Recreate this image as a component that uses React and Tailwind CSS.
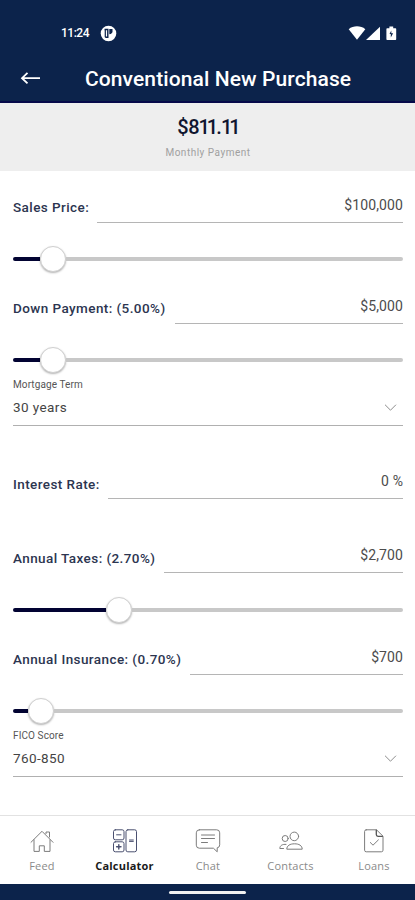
import React from "react";

const strokeProps = {
  fill: "none",
  stroke: "currentColor",
  strokeWidth: 1,
  strokeLinecap: "round",
  strokeLinejoin: "round",
};

function StatusBar() {
  return (
    <div className="flex h-[54px] items-end justify-between pl-[61px] pr-[18px] pb-[11px] text-white">
      <div className="flex h-5 items-center">
        <span className="w-[28px] whitespace-nowrap text-[12px] font-medium leading-5 tracking-[-0.5px]">11:24</span>
        <svg className="ml-[11px]" width="17" height="17" viewBox="0 0 17 17">
          <circle cx="8.5" cy="8.5" r="7.8" fill="#fff" />
          <path d="M4.6 4.5h3.2v7.8H5.3" fill="none" stroke="#0c234b" strokeWidth="1.4" />
          <path d="M5.3 4.5v7.8" fill="none" stroke="#0c234b" strokeWidth="1.2" />
          <path d="M9.3 3.9h3.2v2.4c0 1.7-1.1 2.8-3.2 3z" fill="#0c234b" />
        </svg>
      </div>
      <svg width="50" height="20" viewBox="0 0 50 20">
        <path d="M1.7 6.2C6.2 2.4 13.8 2.4 18.3 6.2L10 16.8z" fill="#fff" />
        <path d="M19 17L33 3.7V17z" fill="#fff" />
        <path d="M40.1 5.2h2.3V3.5h3.8v1.7H48.5q.7 0 .7.7v10.4q0 .7-.7.7h-8.4q-.7 0-.7-.7V5.9q0-.7.7-.7z" fill="#fff" />
        <path d="M44.3 7.4L42.5 11h1.3v3.4l2.3-4.1h-1.8z" fill="#0c234b" />
      </svg>
    </div>
  );
}

function Header() {
  return (
    <header className="h-[103px] border-b-2 border-[#06094a] bg-[#0c234b]">
      <StatusBar />
      <div className="flex h-[48px] items-center text-white">
        <svg className="ml-5 shrink-0" width="22" height="20" viewBox="0 0 22 20">
          <path d="M20 10.2H2M7.5 4.8L2 10.2L7.5 15.4" fill="none" stroke="#fff" strokeWidth="1.8" />
        </svg>
        <h1 className="ml-[43px] whitespace-nowrap pt-px text-[21px] font-medium leading-6 tracking-[0.1px]">Conventional New Purchase</h1>
      </div>
    </header>
  );
}

function Field({ label, value, labelClass }) {
  return (
    <div className="flex h-7 items-end">
      <div className={`shrink-0 whitespace-nowrap text-[13.5px] font-medium leading-4 tracking-[0.42px] text-[#2c3550] ${labelClass}`}>
        {label}
      </div>
      <div className="flex h-7 flex-1 justify-end border-b border-[#b5b5b5] text-[14px] leading-[20px] tracking-[0.1px] text-[#4c4c4c]">
        {value}
      </div>
    </div>
  );
}

function Slider({ value }) {
  return (
    <div className="flex h-[26px] items-center">
      <div className="h-1 rounded-l-sm bg-[#020332]" style={{ width: value - 13 }} />
      <div className="h-[26px] w-[26px] shrink-0 rounded-full border border-[#d0d0d0] bg-white shadow-[0_1px_2px_rgba(0,0,0,0.3)]" />
      <div className="h-1 flex-1 rounded-r-sm bg-[#c8c8c8]" />
    </div>
  );
}

function Select({ label, value }) {
  return (
    <div className="h-[48px] border-b border-[#b0b0b0]">
      <div className="text-[10px] leading-[14px] tracking-[0.1px] text-[#555]">{label}</div>
      <div className="mt-[6px] flex items-center justify-between pr-[6px]">
        <span className="pb-[2px] text-[13.5px] leading-[18px] tracking-[0.4px] text-[#444]">{value}</span>
        <svg width="13" height="10" viewBox="0 0 13 10">
          <path d="M1.3 2L6.5 7.2L11.7 2" {...strokeProps} stroke="#8d8d8d" />
        </svg>
      </div>
    </div>
  );
}

function HouseIcon() {
  return (
    <svg width="28" height="28" viewBox="0 0 28 28" {...strokeProps}>
      <path d="M3 15.3L14 4.3L25 15.3M6 12.8V24.4h5.3v-5.6h5V24.4H22V12.8M18 6.6V5h3.5v5" />
    </svg>
  );
}

function CalculatorIcon() {
  return (
    <svg width="28" height="28" viewBox="0 0 28 28" {...strokeProps} stroke="#4a5070">
      <rect x="2.5" y="2.8" width="10.5" height="10" rx="1.8" />
      <rect x="2.5" y="14.8" width="10.5" height="10" rx="1.8" />
      <rect x="15" y="2.8" width="10.5" height="22" rx="1.8" />
      <path d="M5.6 7.8h4.4" />
      <path d="M5.6 19.8h4.4M7.8 17.6v4.4" strokeWidth="1.4" />
      <path d="M18.5 13h3.8M18.5 14.4h3.8" />
    </svg>
  );
}

function ChatIcon() {
  return (
    <svg width="28" height="28" viewBox="0 0 28 28" {...strokeProps}>
      <path d="M5.3 2.8h17.4q3 0 3 3v12q0 2.8-2.5 3v4l-3.8-3.6H5.3q-3 0-3-3V5.8q0-3 3-3zM7.5 8h13M7.5 11.5h13M7.5 15.5h6" />
    </svg>
  );
}

function ContactsIcon() {
  return (
    <svg width="28" height="28" viewBox="0 0 28 28" {...strokeProps}>
      <circle cx="17.3" cy="9.4" r="4.3" />
      <circle cx="8.2" cy="11.5" r="3" />
      <path d="M9.8 21.8c0-3.2 3.2-5 7.7-5s7.7 1.8 7.7 5zM9 17.4c-3.6-.4-6.1 1.1-6.2 4.1h3.7" />
    </svg>
  );
}

function LoansIcon() {
  return (
    <svg width="28" height="28" viewBox="0 0 28 28" {...strokeProps}>
      <path d="M6.2 2.8h10.3L23 9.2v14q0 1.6-1.6 1.6H6.2q-1.6 0-1.6-1.6V4.4q0-1.6 1.6-1.6zM10.3 15.5l2.7 2.7l5.4-5.3" />
      <path d="M16.3 3.2v4.4q0 1.7 1.7 1.7h4.4" stroke="#555" strokeWidth="1.3" />
    </svg>
  );
}

const tabs = [
  { name: "Feed", icon: HouseIcon, text: "pl-px text-[#8a8a8a]" },
  { name: "Calculator", icon: CalculatorIcon, text: "font-bold text-[#1a1a1a]" },
  { name: "Chat", icon: ChatIcon, text: "pl-px text-[#8a8a8a]" },
  { name: "Contacts", icon: ContactsIcon, text: "text-[#8a8a8a]" },
  { name: "Loans", icon: LoansIcon, text: "pl-px text-[#8a8a8a]" },
];

export default function App() {
  return (
    <div className="flex h-[900px] w-[415px] flex-col overflow-hidden bg-white font-[Roboto,sans-serif]">
      <Header />
      <section className="h-[68px] bg-[#eeeeee] pt-[12px] text-center">
        <div className="pl-px text-[20px] font-medium leading-6 text-[#10152f]">
          <span className="tracking-[-0.3px]">$8</span>
          <span className="-ml-px tracking-[-3px]">1</span>
          <span className="tracking-[-2px]">1</span>
          <span className="tracking-[-0.8px]">.</span>
          <span className="tracking-[-3px]">1</span>
          <span className="tracking-[-2px]">1</span>
        </div>
        <div className="mt-[8px] pl-px text-[10px] leading-3 tracking-[0.5px] text-[#a0a0a0]">Monthly Payment</div>
      </section>

      <main className="flex h-[644px] flex-col px-3 pl-[13px] pt-[24px]">
        <Field label="Sales Price:" value="$100,000" labelClass="w-[84px] pb-[8px]" />
        <div className="mt-[23px]"><Slider value={40} /></div>
        <div className="mt-[24px]">
          <Field label="Down Payment: (5.00%)" value="$5,000" labelClass="w-[162px] pb-[8px]" />
        </div>
        <div className="mt-[23px]"><Slider value={40} /></div>
        <div className="mt-[5px]">
          <Select label="Mortgage Term" value="30 years" />
        </div>
        <div className="mt-[45px]">
          <Field label="Interest Rate:" value="0 %" labelClass="w-[95px] pb-[7px]" />
        </div>
        <div className="mt-[46px]">
          <Field label="Annual Taxes: (2.70%)" value="$2,700" labelClass="w-[151px] pb-[7px]" />
        </div>
        <div className="mt-[24px]"><Slider value={106} /></div>
        <div className="mt-[24px]">
          <Field label="Annual Insurance: (0.70%)" value="$700" labelClass="w-[177px] pb-[8px]" />
        </div>
        <div className="mt-[23px]"><Slider value={28} /></div>
        <div className="mt-[5px]">
          <Select label="FICO Score" value="760-850" />
        </div>
      </main>

      <nav className="grid h-[69px] grid-cols-5 border-t border-[#e2e2e2] bg-white font-['Open_Sans',sans-serif]">
        {tabs.map(({ name, icon: Icon, text }) => (
          <div key={name} className="flex flex-col items-center pt-[11px] text-[#7c7c7c]">
            <Icon />
            <span className={`mt-[3px] text-[11px] leading-4 tracking-[0.2px] ${text}`}>{name}</span>
          </div>
        ))}
      </nav>
      <footer className="flex h-4 justify-center bg-[#0c234b] pt-[7px]">
        <div className="h-[3px] w-[77px] rounded-full bg-[#f2f2f2]" />
      </footer>
    </div>
  );
}
